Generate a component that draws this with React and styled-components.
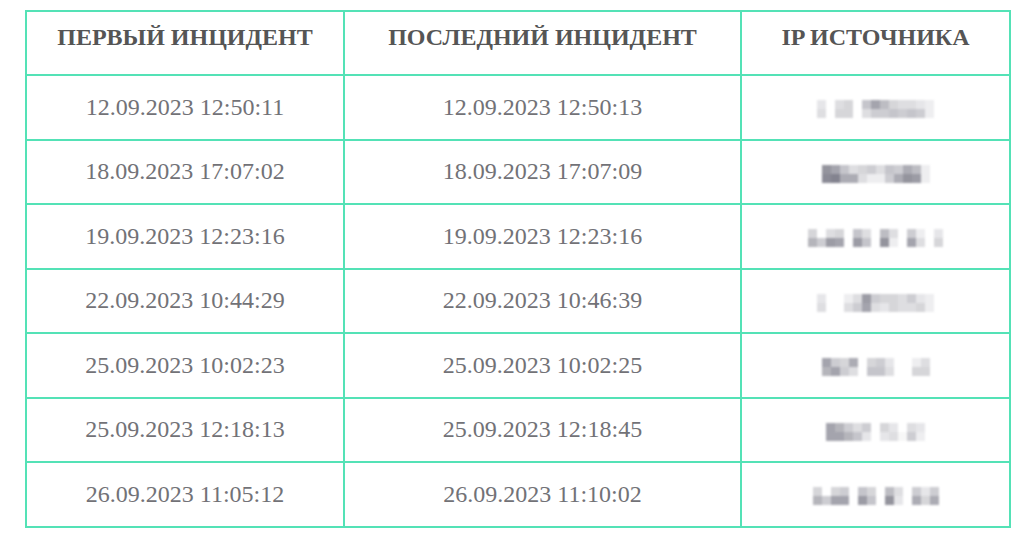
import styled, { createGlobalStyle } from "styled-components";

const GlobalStyle = createGlobalStyle`
  html, body {
    margin: 0;
    padding: 0;
    background: #ffffff;
  }
`;

const Page = styled.div`
  padding: 10px 15px 0 25px;
  font-family: "Liberation Serif", "Times New Roman", serif;
`;

const Table = styled.table`
  width: 984px;
  border-collapse: collapse;
  table-layout: fixed;
`;

const Th = styled.th`
  height: 50px;
  padding: 0 0 12px;
  border: 2px solid #54e2b6;
  font-size: 24px;
  font-weight: 700;
  color: #555555;
  text-align: center;
  vertical-align: middle;
`;

const Td = styled.td`
  height: 62.5px;
  padding: 0;
  border: 2px solid #54e2b6;
  font-size: 24px;
  color: #727277;
  text-align: center;
  vertical-align: middle;
`;

const Mosaic = styled.div`
  display: inline-grid;
  grid-auto-flow: column;
  grid-template-rows: repeat(2, 9px);
  grid-auto-columns: 9px;
  filter: blur(1.2px);
  vertical-align: middle;
`;

const Cell = styled.span`
  display: block;
`;

const rows = [
  ["12.09.2023 12:50:11", "12.09.2023 12:50:13", "a"],
  ["18.09.2023 17:07:02", "18.09.2023 17:07:09", "b"],
  ["19.09.2023 12:23:16", "19.09.2023 12:23:16", "c"],
  ["22.09.2023 10:44:29", "22.09.2023 10:46:39", "d"],
  ["25.09.2023 10:02:23", "25.09.2023 10:02:25", "e"],
  ["25.09.2023 12:18:13", "25.09.2023 12:18:45", "f"],
  ["26.09.2023 11:05:12", "26.09.2023 11:10:02", "g"],
];

// pixelated ip addresses: pairs [top, bottom] opacity per column
const masks = {
  a: [[0.15, 0.2], [0, 0], [0.2, 0.25], [0.25, 0.25], [0, 0], [0.35, 0.2], [0.55, 0.3], [0.4, 0.3], [0.25, 0.35], [0.2, 0.3], [0.2, 0.35], [0.15, 0.3], [0.1, 0.1]],
  b: [[0.65, 0.7], [0.55, 0.75], [0.35, 0.5], [0.2, 0.5], [0.25, 0.2], [0.3, 0.1], [0.2, 0.1], [0.35, 0.3], [0.3, 0.5], [0.5, 0.65], [0.4, 0.6], [0.1, 0.1]],
  c: [[0.25, 0.45], [0, 0.3], [0.2, 0.6], [0.25, 0.55], [0, 0], [0.35, 0.6], [0.2, 0.35], [0, 0], [0.4, 0.65], [0.2, 0.1], [0, 0], [0.3, 0.55], [0.1, 0.2], [0, 0], [0.15, 0.25]],
  d: [[0.15, 0.2], [0, 0], [0, 0], [0.1, 0.2], [0.2, 0.3], [0.6, 0.55], [0.3, 0.2], [0.25, 0.15], [0.25, 0.25], [0.2, 0.2], [0.3, 0.2], [0.15, 0.25], [0.1, 0.1]],
  e: [[0.55, 0.45], [0.3, 0.55], [0.25, 0.3], [0.5, 0.2], [0, 0], [0.25, 0.35], [0.3, 0.35], [0.15, 0.2], [0, 0], [0, 0], [0.1, 0.25], [0.2, 0.25]],
  f: [[0.55, 0.55], [0.45, 0.55], [0.3, 0.45], [0.2, 0.35], [0.3, 0.15], [0, 0], [0.25, 0.15], [0.15, 0.2], [0, 0.05], [0.2, 0.3], [0.15, 0.1]],
  g: [[0.25, 0.45], [0, 0.3], [0.25, 0.55], [0.3, 0.55], [0, 0], [0.35, 0.6], [0.25, 0.35], [0, 0], [0.4, 0.65], [0.2, 0.15], [0, 0], [0.3, 0.5], [0.15, 0.25], [0.3, 0.5]],
};

function Ip({ id }) {
  const cols = masks[id];
  return (
    <Mosaic>
      {cols.flatMap((c, i) =>
        c.map((o, j) => (
          <Cell key={`${i}-${j}`} style={{ background: `rgba(90, 90, 105, ${o})` }} />
        ))
      )}
    </Mosaic>
  );
}

export default function App() {
  return (
    <Page>
      <GlobalStyle />
      <Table>
        <colgroup>
          <col style={{ width: 318 }} />
          <col style={{ width: 397 }} />
          <col style={{ width: 269 }} />
        </colgroup>
        <thead>
          <tr>
            <Th>ПЕРВЫЙ ИНЦИДЕНТ</Th>
            <Th>ПОСЛЕДНИЙ ИНЦИДЕНТ</Th>
            <Th>IP ИСТОЧНИКА</Th>
          </tr>
        </thead>
        <tbody>
          {rows.map((r) => (
            <tr key={r[0]}>
              <Td>{r[0]}</Td>
              <Td>{r[1]}</Td>
              <Td>
                <Ip id={r[2]} />
              </Td>
            </tr>
          ))}
        </tbody>
      </Table>
    </Page>
  );
}
